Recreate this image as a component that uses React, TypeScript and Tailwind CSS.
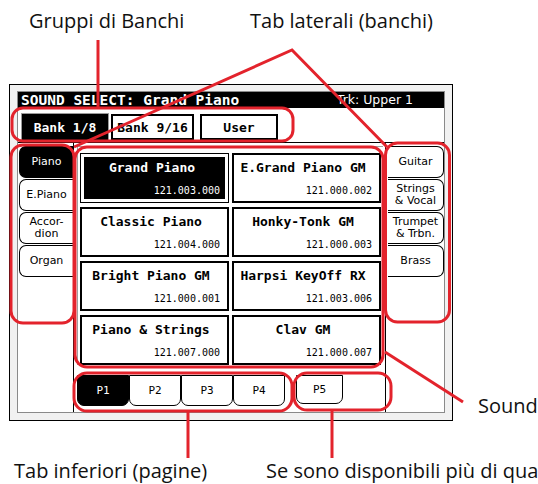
const SOUNDS = [
  { name: "Grand Piano", code: "121.003.000", selected: true },
  { name: "E.Grand Piano GM", code: "121.000.002" },
  { name: "Classic Piano", code: "121.004.000" },
  { name: "Honky-Tonk GM", code: "121.000.003" },
  { name: "Bright Piano GM", code: "121.000.001" },
  { name: "Harpsi KeyOff RX", code: "121.003.006" },
  { name: "Piano & Strings", code: "121.007.000" },
  { name: "Clav GM", code: "121.000.007" },
];

const LEFT_TABS = [["Piano"], ["E.Piano"], ["Accor-", "dion"], ["Organ"]];
const RIGHT_TABS = [["Guitar"], ["Strings", "& Vocal"], ["Trumpet", "& Trbn."], ["Brass"]];

function TabLabel({ lines }: { lines: string[] }) {
  return (
    <div className="flex flex-col items-center text-[11px] leading-[12px]">
      {lines.map((l) => (
        <span key={l}>{l}</span>
      ))}
    </div>
  );
}

function SoundButton({ name, code, selected }: { name: string; code: string; selected?: boolean }) {
  if (selected) {
    return (
      <div className="h-[50px] border border-black bg-white p-[3px]">
        <div className="flex h-full flex-col bg-black pt-[3px] pr-[5px] text-white">
          <span className="text-center text-[13px] font-bold leading-[16px]">{name}</span>
          <span className="mt-[9px] text-right text-[10px] leading-[12px]">{code}</span>
        </div>
      </div>
    );
  }
  return (
    <div className="flex h-[50px] flex-col border-2 border-black bg-white pt-[5px] pr-[7px]">
      <span className="text-center text-[13px] font-bold leading-[16px]">{name}</span>
      <span className="mt-[9px] text-right text-[10px] leading-[12px]">{code}</span>
    </div>
  );
}

function Screen() {
  return (
    <div className="h-[337px] w-[444px] shrink-0 border border-black bg-[#f1f1f1] px-[7px] pt-[6px] pb-[7px] font-['DejaVu_Sans_Mono',monospace] text-black">
      <div className="flex h-full flex-col border border-[#8a8a8a] bg-white">
        {/* title bar */}
        <div className="flex h-[16px] items-center justify-between bg-black pl-[3px] pr-[31px] text-white">
          <span className="text-[14.5px] font-bold leading-[16px]">SOUND SELECT: Grand Piano</span>
          <span className="font-['DejaVu_Sans',sans-serif] text-[12.5px] leading-[16px]">Trk: Upper 1</span>
        </div>

        {/* bank groups */}
        <div className="flex h-[35px] items-start border-b border-black pl-[4px] pt-[6px] text-[13px] font-bold">
          <div className="flex h-[26px] w-[86px] items-center justify-center bg-black text-white outline outline-1 outline-[#9a9a9a]">
            Bank 1/8
          </div>
          <div className="ml-[3px] flex h-[26px] w-[83px] items-center justify-center border-2 border-black">Bank 9/16</div>
          <div className="ml-[6px] flex h-[26px] w-[78px] items-center justify-center border-2 border-black">User</div>
        </div>

        <div className="flex flex-1">
          {/* left tabs */}
          <div className="flex w-[56px] flex-col gap-[1px] border-r border-black pl-[1px] pt-[3px] font-['DejaVu_Sans',sans-serif]">
            {LEFT_TABS.map((t, i) => (
              <div
                key={t[0]}
                className={
                  i === 0
                    ? "flex h-[32px] items-center justify-center rounded-l-[7px] border border-r-0 border-black bg-black text-white"
                    : "flex h-[32px] items-center justify-center rounded-l-[7px] border border-r-0 border-black bg-white"
                }
              >
                <TabLabel lines={t} />
              </div>
            ))}
          </div>

          {/* sound grid + pages */}
          <div className="flex w-[311px] flex-col pl-[3px]">
            <div className="mt-[3px] mr-[2px] border-l border-t border-[#a0a0a0] pl-[2px] pt-[6px]">
              <div className="grid grid-cols-[149px_149px] gap-x-[3px] gap-y-[4px]">
                {SOUNDS.map((s) => (
                  <SoundButton key={s.name} {...s} />
                ))}
              </div>
            </div>
            <div className="mt-[10px] flex text-[11px]">
              {["P1", "P2", "P3", "P4"].map((p, i) => (
                <div
                  key={p}
                  className={
                    i === 0
                      ? "flex h-[31px] w-[52px] items-center justify-center rounded-b-[7px] border border-black bg-black text-white"
                      : "flex h-[31px] w-[52px] items-center justify-center rounded-b-[7px] border border-black bg-white"
                  }
                >
                  {p}
                </div>
              ))}
              <div className="ml-[11px] flex h-[29px] w-[47px] items-center justify-center rounded-b-[7px] border border-black bg-white">
                P5
              </div>
            </div>
          </div>

          {/* right tabs */}
          <div className="flex w-[59px] flex-col gap-[1px] border-l border-black pl-[2px] pt-[3px] font-['DejaVu_Sans',sans-serif]">
            {RIGHT_TABS.map((t) => (
              <div
                key={t[0]}
                className="flex h-[32px] items-center justify-center rounded-r-[7px] border border-l-0 border-black bg-white"
              >
                <TabLabel lines={t} />
              </div>
            ))}
          </div>
        </div>
      </div>
    </div>
  );
}

export default function App() {
  return (
    <div className="relative h-[484px] w-[538px] overflow-hidden bg-white font-['Open_Sans',sans-serif] text-[20px] leading-none text-[#111]">
      <div className="flex h-[84px] items-start whitespace-nowrap pl-[29px] pt-[11px]">
        <span className="w-[221px]">Gruppi di Banchi</span>
        <span>Tab laterali (banchi)</span>
      </div>

      <div className="flex items-start pl-[9px]">
        <Screen />
        <span className="ml-[25px] mt-[312px] whitespace-nowrap">Sound</span>
      </div>

      <div className="mt-[40px] flex whitespace-nowrap pl-[14px]">
        <span className="w-[252px] shrink-0">Tab inferiori (pagine)</span>
        <span className="shrink-0">Se sono disponibili più di quattro pagine</span>
      </div>

      <svg
        className="pointer-events-none absolute left-0 top-0"
        width="538"
        height="484"
        fill="none"
        stroke="#e3232c"
        strokeWidth="3"
      >
        <rect x="12" y="108" width="281" height="33" rx="11" />
        <rect x="11" y="145" width="63" height="178" rx="12" />
        <rect x="75" y="147" width="308" height="220" rx="12" />
        <rect x="385.5" y="143" width="64" height="179" rx="12" />
        <rect x="74" y="373" width="218" height="38" rx="13" />
        <rect x="294" y="373" width="97" height="37" rx="13" />
        <line x1="98" y1="40" x2="98" y2="108" />
        <polyline points="74,147 292,50 387,147" strokeLinejoin="miter" />
        <line x1="385" y1="352" x2="463" y2="402" />
        <line x1="188" y1="411" x2="188" y2="458" />
        <line x1="332" y1="410" x2="332" y2="458" />
      </svg>
    </div>
  );
}
